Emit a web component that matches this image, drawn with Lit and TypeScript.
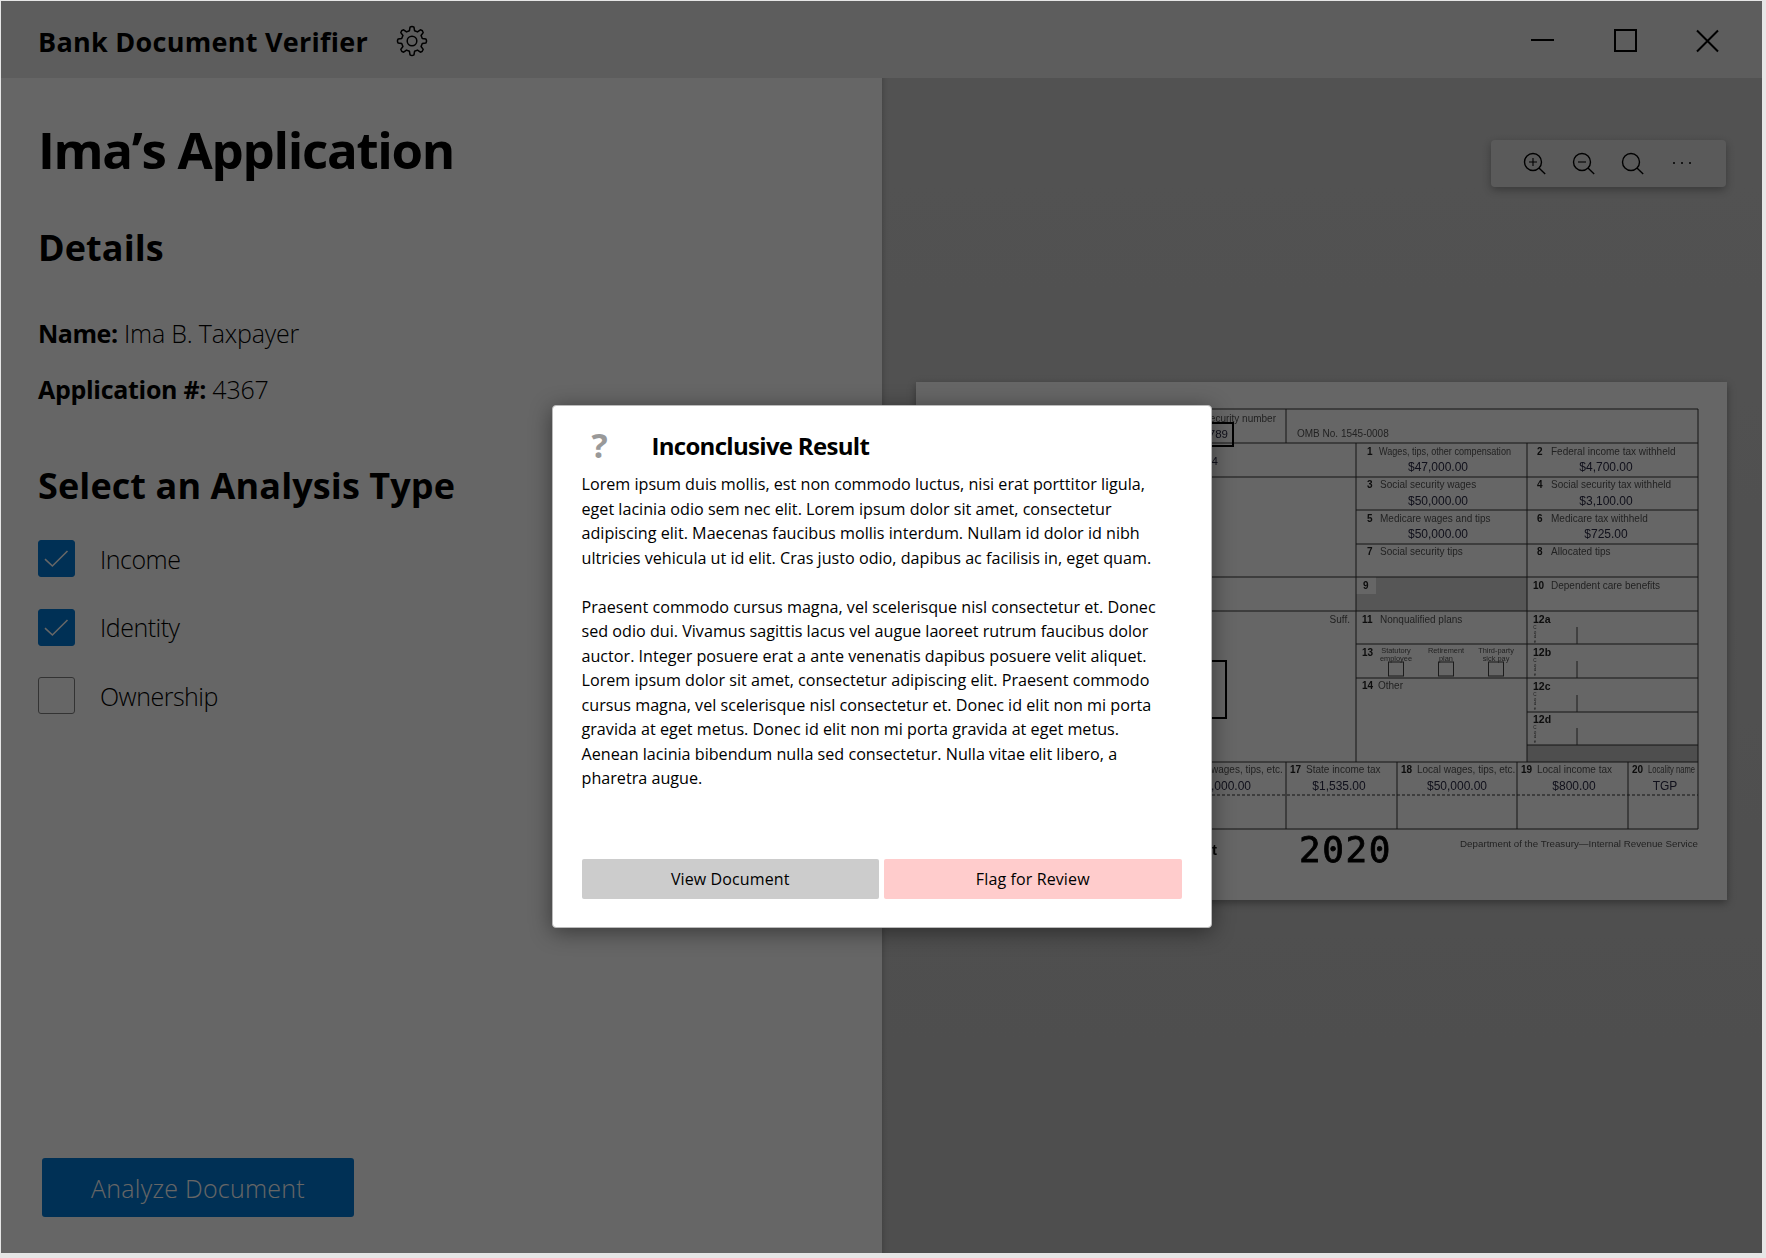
import { LitElement, html, css, svg } from 'lit';
import { customElement } from 'lit/decorators.js';

const gearPath = (() => {
  // 8 teeth outline around a 16,16 centre
  const pts: string[] = [];
  const teeth = 8;
  for (let i = 0; i < teeth; i++) {
    const a = (i / teeth) * Math.PI * 2 - Math.PI / 2;
    const step = Math.PI / teeth;
    const p = (r: number, t: number) => `${(16 + r * Math.cos(t)).toFixed(2)} ${(16 + r * Math.sin(t)).toFixed(2)}`;
    pts.push(`${i === 0 ? 'M' : 'L'}${p(10.6, a - step * 0.62)}`);
    pts.push(`L${p(14, a - step * 0.36)}`);
    pts.push(`Q${p(15.2, a)} ${p(14, a + step * 0.36)}`);
    pts.push(`L${p(10.6, a + step * 0.62)}`);
  }
  return pts.join(' ') + 'Z';
})();

type Lbl = [number, string, number, string];

// number x, number, label x, label  (baseline given per row)
const labels: Array<[number, Lbl]> = [
  [73, [620, '2', 634, 'Federal income tax withheld']],
  [106, [450, '3', 463, 'Social security wages']],
  [106, [620, '4', 634, 'Social security tax withheld']],
  [140, [450, '5', 463, 'Medicare wages and tips']],
  [140, [620, '6', 634, 'Medicare tax withheld']],
  [173, [450, '7', 463, 'Social security tips']],
  [173, [620, '8', 634, 'Allocated tips']],
  [207, [446, '9', 0, '']],
  [207, [616, '10', 634, 'Dependent care benefits']],
  [241, [445, '11', 463, 'Nonqualified plans']],
  [307, [445, '14', 461, 'Other']],
  [391, [350, '', 294, 'wages, tips, etc.']],
  [391, [373, '17', 389, 'State income tax']],
  [391, [484, '18', 500, 'Local wages, tips, etc.']],
  [391, [604, '19', 620, 'Local income tax']],
];

const amounts: Array<[number, number, string]> = [
  [521, 89, '$47,000.00'],
  [689, 89, '$4,700.00'],
  [521, 123, '$50,000.00'],
  [689, 123, '$3,100.00'],
  [521, 156, '$50,000.00'],
  [689, 156, '$725.00'],
  [304, 408, '$50,000.00'],
  [422, 408, '$1,535.00'],
  [540, 408, '$50,000.00'],
  [657, 408, '$800.00'],
  [748, 408, 'TGP'],
];

const hLines: Array<[number, number, number]> = [
  [27, 25, 781], [61, 25, 781], [95, 25, 781], [128, 439, 781], [162, 439, 781],
  [195, 25, 781], [229, 25, 781], [262, 439, 781], [296, 439, 781], [330, 610, 781],
  [363, 610, 781], [380, 25, 781], [447, 25, 781],
];

const vLines: Array<[number, number, number]> = [
  [369, 27, 61], [439, 61, 380], [610, 61, 380], [781, 27, 447],
  [369, 380, 447], [480, 380, 447], [600, 380, 447], [711, 380, 447],
];

const para1 = 'Lorem ipsum duis mollis, est non commodo luctus, nisi erat porttitor ligula, eget lacinia odio sem nec elit. Lorem ipsum dolor sit amet, consectetur adipiscing elit. Maecenas faucibus mollis interdum. Nullam id dolor id nibh ultricies vehicula ut id elit. Cras justo odio, dapibus ac facilisis in, eget quam.';
const para2 = 'Praesent commodo cursus magna, vel scelerisque nisl consectetur et. Donec sed odio dui. Vivamus sagittis lacus vel augue laoreet rutrum faucibus dolor auctor. Integer posuere erat a ante venenatis dapibus posuere velit aliquet. Lorem ipsum dolor sit amet, consectetur adipiscing elit. Praesent commodo cursus magna, vel scelerisque nisl consectetur et. Donec id elit non mi porta gravida at eget metus. Donec id elit non mi porta gravida at eget metus. Aenean lacinia bibendum nulla sed consectetur. Nulla vitae elit libero, a pharetra augue.';

@customElement('app-root')
export class AppRoot extends LitElement {
  static styles = css`
    :host {
      display: block;
      width: 1766px;
      height: 1258px;
      box-sizing: border-box;
      padding: 1px 4px 5px 1px;
      background: #e6e6e6;
      font-family: "Open Sans", "Noto Sans", sans-serif;
      color: #000;
    }
    .window {
      position: relative;
      height: 100%;
      display: flex;
      flex-direction: column;
      background: #fff;
      overflow: hidden;
    }
    .titlebar {
      height: 77px;
      flex: none;
      display: flex;
      align-items: center;
      padding: 0 42px 0 37px;
      background: #e8e8e8;
    }
    .app-name {
      margin-top: 3px;
      font-size: 27px;
      font-weight: 700;
      letter-spacing: 0.27px;
    }
    .gear {
      margin-left: 28px;
      margin-top: 3px;
      width: 32px;
      height: 32px;
    }
    .win-controls {
      margin-left: auto;
      margin-top: 2px;
      display: flex;
      gap: 58.5px;
    }
    .win-controls svg {
      display: block;
      width: 24px;
      height: 24px;
      stroke: #000;
      stroke-width: 2;
      fill: none;
    }
    .body {
      flex: 1;
      display: flex;
      min-height: 0;
    }
    .left {
      width: 881px;
      flex: none;
      box-sizing: border-box;
      padding: 36px 37px 36px;
      display: flex;
      flex-direction: column;
      background: #fff;
      position: relative;
    }
    h1 {
      margin: 0;
      font-size: 51px;
      line-height: 70px;
      font-weight: 700;
      letter-spacing: -1.3px;
    }
    h2 {
      margin: 0;
      font-size: 36px;
      line-height: 50px;
      font-weight: 700;
      letter-spacing: 0.1px;
    }
    .details-head {
      margin-top: 39px;
    }
    .detail {
      font-size: 25px;
      line-height: 34px;
      font-weight: 300;
      letter-spacing: -0.2px;
    }
    .detail b {
      font-weight: 700;
      letter-spacing: -0.45px;
    }
    .detail.first {
      margin-top: 43px;
    }
    .detail.second {
      margin-top: 22px;
    }
    .detail.second b {
      letter-spacing: -0.3px;
    }
    .select-head {
      margin-top: 55px;
    }
    .options {
      margin-top: 29px;
      display: flex;
      flex-direction: column;
      gap: 31.5px;
    }
    .option {
      display: flex;
      align-items: center;
      gap: 25px;
      font-size: 25px;
      font-weight: 300;
      letter-spacing: -0.5px;
    }
    .box {
      width: 37px;
      height: 37px;
      box-sizing: border-box;
      border-radius: 3px;
      border: 1.5px solid #808080;
    }
    .box.on {
      background: #0078d4;
      border-color: #0078d4;
    }
    .box svg {
      display: block;
      width: 34px;
      height: 34px;
      fill: none;
      stroke: #fff;
      stroke-width: 1.6;
    }
    .analyze {
      margin-top: auto;
      margin-left: 4px;
      width: 312px;
      height: 59px;
      border: none;
      border-radius: 3px;
      background: #0078d4;
      color: #fff;
      font-family: inherit;
      font-size: 25px;
      font-weight: 300;
      letter-spacing: 0.25px;
    }
    .right {
      flex: 1;
      box-sizing: border-box;
      padding: 62px 35px 0 0;
      display: flex;
      flex-direction: column;
      align-items: flex-end;
      background: linear-gradient(#cdcdcd, #c2c2c2);
      box-shadow: inset 6px 0 6px -6px rgba(0, 0, 0, 0.25);
    }
    .toolbar {
      width: 235px;
      height: 47px;
      margin-right: 1px;
      box-sizing: border-box;
      padding: 0 0 2px 31px;
      display: flex;
      align-items: center;
      gap: 25px;
      border-radius: 4px;
      background: #e2e2e2;
      box-shadow: 0 3px 8px rgba(0, 0, 0, 0.3);
    }
    .toolbar svg {
      display: block;
      width: 24px;
      height: 24px;
      fill: none;
      stroke: #000;
      stroke-width: 1.4;
    }
    .toolbar .dots {
      stroke: none;
      fill: #000;
      margin-left: 1px;
    }
    .doc {
      margin-top: 195px;
      width: 811px;
      height: 518px;
      display: flex;
      justify-content: flex-end;
      background: #fff;
      box-shadow: 0 3px 8px rgba(0, 0, 0, 0.35);
    }
    .doc svg {
      display: block;
      width: 810px;
      height: 518px;
      filter: blur(0.55px);
      font-family: "Liberation Sans", Arial, sans-serif;
      font-size: 10px;
    }
    .scrim {
      position: absolute;
      inset: 0;
      background: rgba(0, 0, 0, 0.6);
      display: flex;
      align-items: flex-start;
      justify-content: center;
    }
    .dialog {
      margin-top: 404px;
      margin-left: 0;
      width: 660px;
      height: 523px;
      box-sizing: border-box;
      padding: 19px 29px 28px;
      display: flex;
      flex-direction: column;
      background: #fff;
      border: 1px solid #bbb;
      border-radius: 4px;
      box-shadow: 0 4px 22px rgba(0, 0, 0, 0.45);
    }
    .dialog-head {
      display: flex;
      align-items: center;
      height: 41px;
    }
    .mark {
      width: 70px;
      padding-left: 10px;
      box-sizing: border-box;
      margin-top: -2px;
      font-size: 34px;
      font-weight: 700;
      color: #999;
    }
    .dialog-title {
      font-size: 24px;
      font-weight: 700;
      letter-spacing: -0.7px;
    }
    .dialog p {
      margin: 0;
      width: 590px;
      font-size: 16.15px;
      line-height: 24.5px;
    }
    .dialog p + p {
      margin-top: 24.5px;
    }
    .dialog .copy {
      margin-top: 6px;
    }
    .actions {
      margin-top: auto;
      display: flex;
      gap: 5px;
    }
    .actions button {
      flex: 1;
      height: 40px;
      border: none;
      border-radius: 2px;
      font-family: inherit;
      font-size: 16px;
      letter-spacing: 0.12px;
      color: #000;
    }
    .view {
      background: #cccccc;
    }
    .flag {
      background: #ffcccc;
    }
  `;

  private docForm() {
    const ink = '#555';
    const amount = '#2a2a44';
    return html`<svg viewBox="0 0 810 518" aria-label="Form W-2">
      ${svg`
        <rect x="439" y="195" width="171" height="34" fill="#d6d6d6"></rect>
        <rect x="439" y="195" width="20" height="17" fill="#fff"></rect>
        <rect x="610" y="363" width="171" height="17" fill="#c4c4c4"></rect>
        ${hLines.map(([y, a, b]) => svg`<line x1=${a} x2=${b} y1=${y} y2=${y} stroke="#333" stroke-width="1"></line>`)}
        ${vLines.map(([x, a, b]) => svg`<line x1=${x} x2=${x} y1=${a} y2=${b} stroke="#333" stroke-width="1"></line>`)}
        <line x1="25" x2="781" y1="413" y2="413" stroke="#333" stroke-dasharray="3 2"></line>
        <rect x="180" y="41" width="136" height="23" fill="none" stroke="#000" stroke-width="2"></rect>
        <rect x="180" y="279" width="129" height="57" fill="none" stroke="#000" stroke-width="2"></rect>

        <text x="359" y="40" text-anchor="end" fill=${ink}>a Employee's social security number</text>
        <text x="311" y="56" text-anchor="end" font-size="11.5" fill=${amount}>123-45-6789</text>
        <text x="380" y="55" fill=${ink}>OMB No. 1545-0008</text>
        <text x="301" y="83" text-anchor="end" font-size="11" fill=${amount}>12-3456784</text>
        <text x="433" y="241" text-anchor="end" fill=${ink}>Suff.</text>

        <text x="450" y="73" font-weight="700" fill="#222">1</text>
        <text x="462" y="73" textLength="132" lengthAdjust="spacingAndGlyphs" fill=${ink}>Wages, tips, other compensation</text>
        ${labels.map(([y, [nx, n, lx, l]]) => svg`
          <text x=${nx} y=${y} font-weight="700" fill="#222">${n}</text>
          <text x=${lx} y=${y} fill=${ink}>${l}</text>`)}
        ${amounts.map(([x, y, t]) => svg`<text x=${x} y=${y} text-anchor="middle" font-size="12" fill=${amount}>${t}</text>`)}

        <text x="445" y="274" font-weight="700" fill="#222">13</text>
        ${([[479, 'Statutory', 'employee'], [529, 'Retirement', 'plan'], [579, 'Third-party', 'sick pay']] as Array<[number, string, string]>).map(([x, a, b]) => svg`
          <text x=${x} y="271" text-anchor="middle" font-size="7.4" fill=${ink}>${a}</text>
          <text x=${x} y="278.5" text-anchor="middle" font-size="7.4" fill=${ink}>${b}</text>
          <rect x=${x - 7.5} y="280" width="15" height="14" fill="none" stroke="#444"></rect>`)}

        ${([[241, '12a', 262], [274, '12b', 296], [308, '12c', 330], [341, '12d', 363]] as Array<[number, string, number]>).map(([y, t, bottom]) => svg`
          <text x="616" y=${y} font-weight="700" font-size="10.5" fill="#222">${t}</text>
          <line x1="660" x2="660" y1=${bottom - 17} y2=${bottom} stroke="#444"></line>
          ${['C', 'o', 'd', 'e'].map((c, i) => svg`<text x="618" y=${y + 6 + i * 4.6} text-anchor="middle" font-size="4.6" fill=${ink}>${c}</text>`)}`)}

        <text x="715" y="391" font-weight="700" fill="#222">20</text>
        <text x="731" y="391" textLength="47" lengthAdjust="spacingAndGlyphs" fill=${ink}>Locality name</text>
        <text x="300" y="473" text-anchor="end" font-weight="700" font-size="15" fill="#111">Wage and Tax Statement</text>
        <text x="382" y="480" font-family="DejaVu Sans Mono, monospace" font-size="36" letter-spacing="1.6" stroke="#000" stroke-width="0.8" fill="#000">2020</text>
        <text x="781" y="465" text-anchor="end" font-size="9.75" fill=${ink}>Department of the Treasury—Internal Revenue Service</text>
      `}
    </svg>`;
  }

  private magnifier(inner: unknown) {
    return html`<svg viewBox="0 0 24 24">
      <circle cx="11" cy="11" r="8.5"></circle>
      <line x1="17" y1="17" x2="23.2" y2="23"></line>
      ${inner}
    </svg>`;
  }

  private option(name: string, on: boolean) {
    return html`<div class="option">
      <div class="box ${on ? 'on' : ''}">
        ${on
          ? html`<svg viewBox="0 0 34 34"><polyline points="6,18.2 13.4,25 28.5,10"></polyline></svg>`
          : ''}
      </div>
      <span>${name}</span>
    </div>`;
  }

  render() {
    return html`
      <div class="window">
        <div class="titlebar">
          <div class="app-name">Bank Document Verifier</div>
          <svg class="gear" viewBox="0 0 32 32" fill="none" stroke="#000" stroke-width="1.5" stroke-linejoin="round">
            <path d=${gearPath}></path>
            <circle cx="16" cy="16" r="4.8"></circle>
          </svg>
          <div class="win-controls">
            <svg viewBox="0 0 24 24"><line x1="0" y1="11" x2="23" y2="11"></line></svg>
            <svg viewBox="0 0 24 24"><rect x="1" y="1" width="21" height="21"></rect></svg>
            <svg viewBox="0 0 24 24"><path d="M1 1.5 22 22.5M22 1.5 1 22.5"></path></svg>
          </div>
        </div>
        <div class="body">
          <section class="left">
            <h1>Ima’s Application</h1>
            <h2 class="details-head">Details</h2>
            <div class="detail first"><b>Name:</b> Ima B. Taxpayer</div>
            <div class="detail second"><b>Application #:</b> 4367</div>
            <h2 class="select-head">Select an Analysis Type</h2>
            <div class="options">
              ${this.option('Income', true)}
              ${this.option('Identity', true)}
              ${this.option('Ownership', false)}
            </div>
            <button class="analyze">Analyze Document</button>
          </section>
          <section class="right">
            <div class="toolbar">
              ${this.magnifier(svg`<path d="M7 11h8M11 7v8" stroke-width="1.1"></path>`)}
              ${this.magnifier(svg`<path d="M7 11h8" stroke-width="1.1"></path>`)}
              ${this.magnifier('')}
              <svg class="dots" viewBox="0 0 24 24">
                <circle cx="4" cy="12" r="1"></circle>
                <circle cx="12" cy="12" r="1"></circle>
                <circle cx="20" cy="12" r="1"></circle>
              </svg>
            </div>
            <div class="doc">${this.docForm()}</div>
          </section>
        </div>
        <div class="scrim">
          <div class="dialog">
            <div class="dialog-head">
              <div class="mark">?</div>
              <div class="dialog-title">Inconclusive Result</div>
            </div>
            <div class="copy">
              <p>${para1}</p>
              <p>${para2}</p>
            </div>
            <div class="actions">
              <button class="view">View Document</button>
              <button class="flag">Flag for Review</button>
            </div>
          </div>
        </div>
      </div>
    `;
  }
}
